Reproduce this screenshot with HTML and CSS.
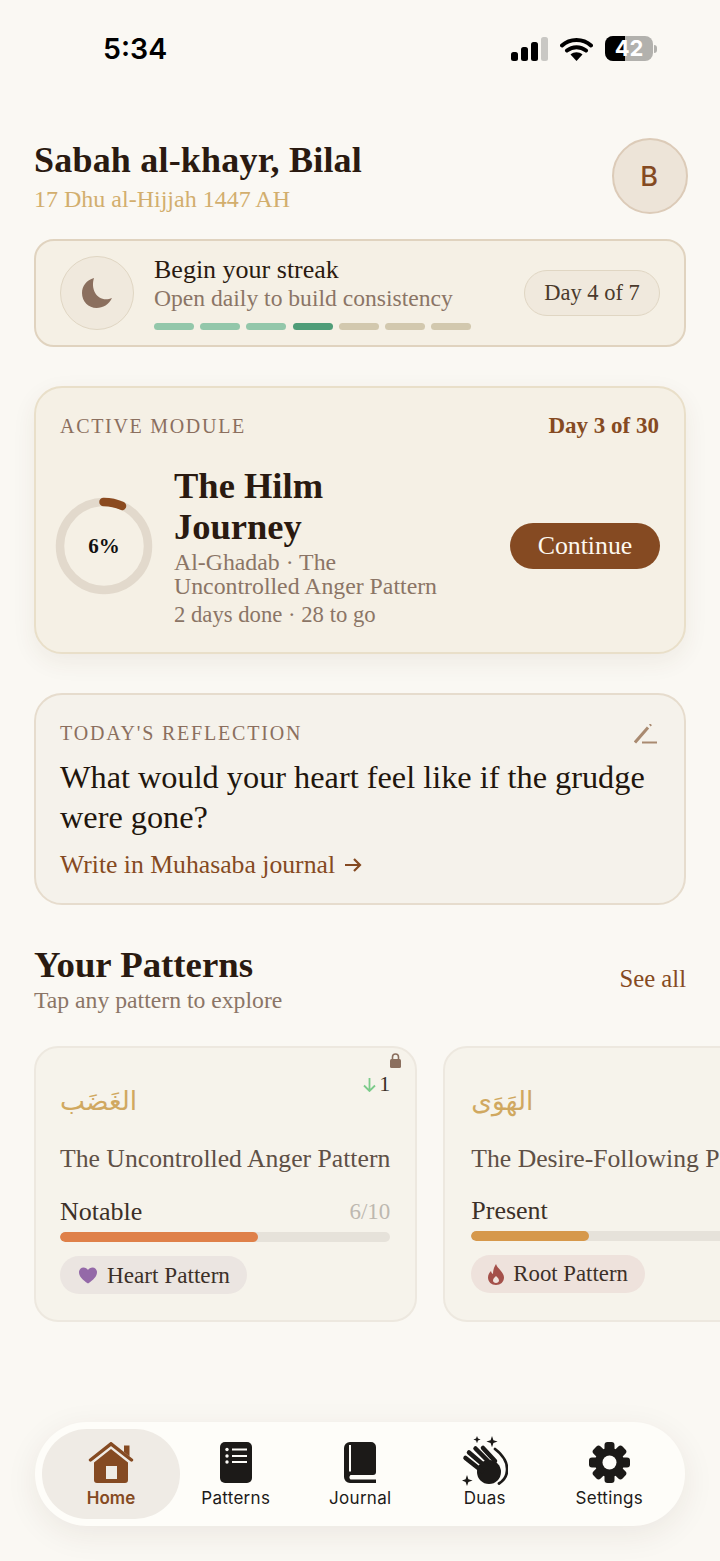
FILE: index.html
```html
<!DOCTYPE html>
<html lang="en">
<head>
    <meta charset="UTF-8">
    <meta name="viewport" content="width=device-width, initial-scale=1.0">
    <title>Home</title>
    <link rel="stylesheet" href="styles.css">
</head>
<body>
    <div class="status-bar">
        <span class="status-time">5:34</span>
        <div class="status-icons">
            <svg width="37" height="24" viewBox="0 0 37 24"><rect x="0" y="15" width="7" height="9" rx="2.5" fill="#000"/><rect x="10" y="10" width="7" height="14" rx="2.5" fill="#000"/><rect x="20" y="5" width="7" height="19" rx="2.5" fill="#000"/><rect x="30" y="0" width="7" height="24" rx="2.5" fill="#c9c8c4"/></svg>
            <svg width="33" height="24" viewBox="0 0 33 24"><path d="M2 8.5C10 1 23 1 31 8.5M7 13.5C12.500 9 20.500 9 26 13.500" fill="none" stroke="#000" stroke-width="4" stroke-linecap="round"/><path d="M16.500 24L10.500 17.500C14 14.500 19 14.500 22.500 17.500Z" fill="#000"/></svg>
            <div class="battery">
                <div class="battery-body"><span class="battery-fill"></span><span class="battery-num">42</span></div>
                <span class="battery-cap"></span>
            </div>
        </div>
    </div>

    <main class="content">
        <header class="greeting">
            <div>
                <h1>Sabah al-khayr, Bilal</h1>
                <p class="hijri">17 Dhu al-Hijjah 1447 AH</p>
            </div>
            <div class="avatar">B</div>
        </header>

        <section class="streak-card">
            <div class="moon-circle">
                <svg width="32" height="32" viewBox="0 0 32 32"><path d="M13 1C5.500 3 1 9 1 16c0 8.500 6.500 15 14.500 15 6.500 0 12.500-3.500 15.500-10-2 1-4 1.300-6 1.300C15.500 22.300 9.500 12 13 1Z" fill="#8b6f5e"/></svg>
            </div>
            <div class="streak-text">
                <div class="streak-title">Begin your streak</div>
                <div class="streak-sub">Open daily to build consistency</div>
                <div class="streak-bars">
                    <span class="seg done"></span><span class="seg done"></span><span class="seg done"></span><span class="seg today"></span><span class="seg"></span><span class="seg"></span><span class="seg"></span>
                </div>
            </div>
            <div class="day-pill">Day 4 of 7</div>
        </section>

        <section class="module-card">
            <div class="module-top">
                <span class="label">ACTIVE MODULE</span>
                <span class="module-day">Day 3 of 30</span>
            </div>
            <div class="module-body">
                <div class="ring">
                    <svg width="98" height="98" viewBox="0 0 98 98"><circle cx="49" cy="49" r="44" fill="none" stroke="#e2d9cc" stroke-width="8.500"/><path d="M48.500 5A44 44 0 0 1 67 8.900" fill="none" stroke="#8b4a1f" stroke-width="8.500" stroke-linecap="round"/></svg>
                    <span class="ring-num">6%</span>
                </div>
                <div class="module-info">
                    <h2>The Hilm<br>Journey</h2>
                    <p class="module-sub">Al-Ghadab · The<br>Uncontrolled Anger Pattern</p>
                    <p class="module-count">2 days done · 28 to go</p>
                </div>
                <div class="continue-btn">Continue</div>
            </div>
        </section>

        <section class="reflection-card">
            <div class="module-top">
                <span class="label">TODAY'S REFLECTION</span>
                <svg class="pen" width="24" height="20" viewBox="0 0 24 20"><path d="M1 18.500L14 3.500" fill="none" stroke="#a98a70" stroke-width="3"/><path d="M15.800 1.500l1.300-1.200" fill="none" stroke="#a98a70" stroke-width="2.400"/><path d="M8 18.500H23" fill="none" stroke="#a98a70" stroke-width="2"/></svg>
            </div>
            <p class="question">What would your heart feel like if the grudge were gone?</p>
            <div class="journal-link">Write in Muhasaba journal
                <svg width="18" height="16" viewBox="0 0 18 16"><path d="M1 8H16M10 2l6 6-6 6" fill="none" stroke="#854a22" stroke-width="2.200"/></svg>
            </div>
        </section>

        <div class="section-head">
            <div>
                <h2 class="section-title">Your Patterns</h2>
                <p class="section-sub">Tap any pattern to explore</p>
            </div>
            <span class="see-all">See all</span>
        </div>

        <div class="pattern-row">
            <article class="pattern-card">
                <svg class="lock" width="11" height="15" viewBox="0 0 11 15"><path d="M2.500 7V4a3 3 0 0 1 6 0v3" fill="none" stroke="#8b6f5e" stroke-width="1.600"/><rect x="0" y="6" width="11" height="9" rx="1.500" fill="#8b6f5e"/></svg>
                <div class="pattern-top">
                    <span class="arabic" lang="ar" dir="rtl">الغَضَب</span>
                    <span class="trend">
                        <svg width="13" height="15" viewBox="0 0 13 15"><path d="M6.500 1V14M1 8.500l5.500 5.500 5.500-5.500" fill="none" stroke="#7ccb8a" stroke-width="1.800"/></svg>
                        1
                    </span>
                </div>
                <p class="pattern-name">The Uncontrolled Anger Pattern</p>
                <div class="level-row"><span class="level">Notable</span><span class="score">6/10</span></div>
                <div class="track"><div class="fill anger" style="width: 60%"></div></div>
                <div class="tag heart-tag">
                    <svg width="18" height="17" viewBox="0 0 20 18"><path d="M10 18C4 13.500 0 10 0 5.300 0 2 2.400 0 5 0c2.200 0 4 1 5 3 1-2 2.800-3 5-3 2.600 0 5 2 5 5.300C20 10 16 13.500 10 18Z" fill="#9469a8"/></svg>
                    <span>Heart Pattern</span>
                </div>
            </article>
            <article class="pattern-card">
                <div class="pattern-top">
                    <span class="arabic" lang="ar" dir="rtl">الهَوَى</span>
                </div>
                <p class="pattern-name">The Desire-Following Pattern</p>
                <div class="level-row"><span class="level">Present</span></div>
                <div class="track"><div class="fill desire" style="width: 36%"></div></div>
                <div class="tag root-tag">
                    <svg width="16" height="21" viewBox="0 0 16 21"><path fill-rule="evenodd" d="M8 0c1 3 2.500 4 4.500 6.500C14.500 9 16 11 16 13.500 16 18 12.500 21 8 21s-8-3-8-7.500c0-3 1.500-5 3-6.500.3 1.500 1 2.500 2 3C5 6.500 6 3 8 0ZM8 12c-1.800 1.500-3 3-3 4.500S6.300 19 8 19s3-1 3-2.500S9.800 13.500 8 12Z" fill="#a4504a"/></svg>
                    <span>Root Pattern</span>
                </div>
            </article>
        </div>
    </main>

    <nav class="tab-bar">
        <div class="tab active">
            <svg width="46" height="41" viewBox="0 0 46 41"><path d="M2.500 18L23 1.800 43.500 18" fill="none" stroke="#854a22" stroke-width="3.400" stroke-linecap="round"/><path d="M36 3.500h5.500v11L36 10Z" fill="#854a22"/><path fill-rule="evenodd" d="M23 7L40 20.500V38a3 3 0 0 1-3 3H9a3 3 0 0 1-3-3V20.500ZM18 24V37H29V24Z" fill="#854a22"/></svg>
            <span>Home</span>
        </div>
        <div class="tab">
            <svg width="32" height="41" viewBox="0 0 32 41"><rect width="32" height="41" rx="5" fill="#1c1a18"/><g fill="#fdfcf8"><circle cx="7" cy="7.500" r="1.700"/><circle cx="7" cy="14" r="1.700"/><circle cx="7" cy="20" r="1.700"/><rect x="12" y="6.500" width="15" height="2"/><rect x="12" y="13" width="15" height="2"/><rect x="12" y="19" width="15" height="2"/></g></svg>
            <span>Patterns</span>
        </div>
        <div class="tab">
            <svg width="32" height="41" viewBox="0 0 32 41"><path fill-rule="evenodd" d="M6 0H27a5 5 0 0 1 5 5V30a3 3 0 0 1-3 3H6.500a3.200 3.200 0 0 0 0 4.500H32V41H6a6 6 0 0 1-6-6V6a6 6 0 0 1 6-6ZM5 3V29.500H7V3Z" fill="#1c1a18"/></svg>
            <span>Journal</span>
        </div>
        <div class="tab">
            <svg class="clap" width="46" height="50" viewBox="0 0 46 50">
                <g fill="#1c1a18">
                    <path d="M15 0l1 2.600 2.600 1-2.600 1-1 2.600-1-2.600-2.600-1 2.600-1ZM30 0l1.400 4.200 4.200 1.400-4.200 1.400L30 11.200l-1.400-4.200-4.200-1.400 4.200-1.400ZM5 39l1.400 4.200 4.200 1.400-4.200 1.400L5 50l-1.400-4-3.600-1.400 3.600-1.400Z"/>
                    <circle cx="27" cy="36" r="12"/>
                </g>
                <g fill="none" stroke="#1c1a18" stroke-linecap="round">
                    <path d="M3.500 22L20 35M7 16.500L24 31M13.500 12.500L29 28M21 12L33 25" stroke-width="4.500"/>
                    <path d="M33 13C41 19 47 28 44.500 38C43.500 42 41 45 37 47.500" stroke-width="2.800"/>
                </g>
            </svg>
            <span>Duas</span>
        </div>
        <div class="tab">
            <svg width="41" height="41" viewBox="0 0 41 41"><g fill="#1c1a18"><rect x="15.500" y="0" width="10" height="41" rx="3"/><rect x="15.500" y="0" width="10" height="41" rx="3" transform="rotate(45 20.500 20.500)"/><rect x="15.500" y="0" width="10" height="41" rx="3" transform="rotate(90 20.500 20.500)"/><rect x="15.500" y="0" width="10" height="41" rx="3" transform="rotate(135 20.500 20.500)"/><circle cx="20.500" cy="20.500" r="14.500"/></g><circle cx="20.500" cy="20.500" r="7" fill="#fefdf9"/></svg>
            <span>Settings</span>
        </div>
    </nav>
</body>
</html>
```

FILE: styles.css
```css
/* Global styles */
* {
    box-sizing: border-box;
}

body {
    margin: 0;
    width: 720px;
    height: 1561px;
    overflow: hidden;
    position: relative;
    background-color: #faf8f3;
    font-family: "Liberation Serif", serif;
    color: #2a1a10;
}

h1, h2, p {
    margin: 0;
    font-weight: normal;
}

/* Status bar */
.status-bar {
    height: 138px;
    display: flex;
    justify-content: space-between;
    align-items: flex-start;
    padding: 30px 63px 0 103px;
}

.status-time {
    font-family: Inter, sans-serif;
    font-size: 28.500px;
    font-weight: 600;
    line-height: 38px;
    color: #000;
}

.status-icons {
    display: flex;
    align-items: center;
    gap: 12px;
    margin-top: 6px;
}

.battery {
    display: flex;
    align-items: center;
    gap: 1px;
}

.battery-body {
    position: relative;
    width: 48px;
    height: 25px;
    border-radius: 8px;
    background-color: #b2b1ad;
    overflow: hidden;
}

.battery-fill {
    position: absolute;
    left: 0;
    top: 0;
    bottom: 0;
    width: 20px;
    background-color: #000;
}

.battery-num {
    position: absolute;
    left: 0;
    right: 0;
    top: 0;
    text-align: center;
    font-family: Inter, sans-serif;
    font-size: 22px;
    font-weight: 700;
    line-height: 25px;
    color: #fff;
}

.battery-cap {
    width: 3px;
    height: 8px;
    border-radius: 0 3px 3px 0;
    background-color: #b2b1ad;
}

/* Main */
.content {
    padding-left: 34px;
}

.greeting {
    width: 654px;
    height: 76px;
    display: flex;
    justify-content: space-between;
    align-items: flex-start;
}

.greeting h1 {
    font-size: 36px;
    font-weight: bold;
    letter-spacing: 0.2px;
    line-height: 42px;
    margin-top: 1px;
}

.hijri {
    font-size: 24px;
    line-height: 30px;
    margin-top: 3px;
    color: #d2ae6d;
}

.avatar {
    width: 76px;
    height: 76px;
    border-radius: 50%;
    border: 2px solid #dccbb8;
    background-color: #ede4d8;
    display: flex;
    align-items: center;
    justify-content: center;
    padding-right: 2px;
    font-family: Inter, sans-serif;
    font-size: 27px;
    font-weight: 500;
    color: #854a22;
}

/* Streak */
.streak-card {
    width: 652px;
    height: 108px;
    margin-top: 25px;
    padding: 0 24px;
    display: flex;
    align-items: center;
    background-color: #f5f0e5;
    border: 2px solid #e0d3bf;
    border-radius: 20px;
}

.moon-circle {
    width: 74px;
    height: 74px;
    border-radius: 50%;
    border: 1px solid #e0d6c3;
    background-color: #f0e9dd;
    display: flex;
    align-items: center;
    justify-content: center;
    margin-right: 20px;
    flex-shrink: 0;
}

.streak-text {
    flex: 1;
}

.streak-title {
    font-size: 26px;
    line-height: 28px;
}

.streak-sub {
    font-size: 23.600px;
    line-height: 28px;
    color: #8b7566;
}

.streak-bars {
    display: flex;
    gap: 6.200px;
    margin-top: 11px;
}

.seg {
    width: 40px;
    height: 7px;
    border-radius: 4px;
    background-color: #d2c8ae;
}

.seg.done {
    background-color: #93c7aa;
}

.seg.today {
    background-color: #4f9d78;
}

.day-pill {
    width: 136px;
    height: 46px;
    border: 1px solid #e0d6c3;
    border-radius: 23px;
    background-color: #f0e9dd;
    display: flex;
    align-items: center;
    justify-content: center;
    font-size: 22.500px;
    color: #4a3a2c;
}

/* Active module */
.module-card {
    width: 652px;
    height: 268px;
    margin-top: 39px;
    padding: 25px 24px 0 18px;
    background-color: #f5f0e5;
    border: 2px solid #e9dfc9;
    border-radius: 28px;
    box-shadow: 0 8px 24px rgba(90, 60, 30, 0.07);
}

.module-top {
    display: flex;
    justify-content: space-between;
    align-items: center;
    padding-left: 6px;
}

.label {
    font-size: 20px;
    line-height: 26px;
    letter-spacing: 1.700px;
    color: #8b6f5e;
}

.module-day {
    margin-right: 1px;
    font-size: 23px;
    font-weight: bold;
    color: #854a22;
}

.module-body {
    display: flex;
    align-items: center;
    margin-top: 26px;
}

.ring {
    position: relative;
    width: 98px;
    height: 98px;
    margin-left: 1px;
    margin-right: 21px;
    flex-shrink: 0;
}

.ring-num {
    position: absolute;
    left: 0;
    right: 0;
    top: 0;
    text-align: center;
    line-height: 98px;
    font-size: 21px;
    font-weight: bold;
    color: #111;
}

.module-info {
    flex: 1;
    margin-bottom: -2px;
}

.module-info h2 {
    font-size: 36.500px;
    font-weight: bold;
    line-height: 41px;
}

.module-sub {
    font-size: 23.800px;
    line-height: 24px;
    margin-top: 3px;
    color: #8b7566;
}

.module-count {
    font-size: 22.700px;
    line-height: 28px;
    margin-top: 3px;
    color: #8b7566;
}

.continue-btn {
    width: 150px;
    height: 46px;
    border-radius: 23px;
    background-color: #854a22;
    display: flex;
    align-items: center;
    justify-content: center;
    font-size: 25.800px;
    color: #fdf8ef;
}

/* Reflection */
.reflection-card {
    width: 652px;
    height: 212px;
    margin-top: 39px;
    padding: 25px 26px 0 18px;
    background-color: #f5f2eb;
    border: 2px solid #e6dccd;
    border-radius: 28px;
}

.reflection-card .label {
    letter-spacing: 1.800px;
}

.pen {
    margin-top: 1px;
}

.question {
    font-size: 32.300px;
    line-height: 40px;
    margin-top: 11px;
    padding-left: 6px;
    color: #21150c;
}

.journal-link {
    font-size: 25.700px;
    line-height: 30px;
    margin-top: 13px;
    padding-left: 6px;
    color: #854a22;
}

.journal-link svg {
    margin-left: 3px;
}

/* Patterns */
.section-head {
    width: 652px;
    margin-top: 39px;
    display: flex;
    justify-content: space-between;
    align-items: center;
}

.section-title {
    font-size: 36.800px;
    font-weight: bold;
    line-height: 42px;
}

.section-sub {
    font-size: 23.700px;
    line-height: 28px;
    color: #8b7566;
}

.see-all {
    font-size: 24.700px;
    color: #854a22;
}

.pattern-row {
    display: flex;
    gap: 26px;
    margin-top: 32px;
}

.pattern-card {
    position: relative;
    flex: 0 0 383px;
    height: 276px;
    padding: 24px 25px 0 24px;
    background-color: #f6f3eb;
    border: 2px solid #ede8df;
    border-radius: 24px;
}

.pattern-card + .pattern-card {
    padding-left: 26px;
}

.lock {
    position: absolute;
    top: 5px;
    right: 14px;
}

.pattern-top {
    height: 59px;
    display: flex;
    justify-content: space-between;
    align-items: flex-start;
}

.arabic {
    font-family: "DejaVu Sans", sans-serif;
    font-size: 26.500px;
    line-height: 58px;
    color: #d0a860;
}

.trend {
    display: inline-flex;
    align-items: center;
    gap: 3px;
    font-size: 22px;
    line-height: 24px;
    color: #3a2e26;
}

.pattern-name {
    font-size: 25.700px;
    line-height: 30px;
    margin-top: 13px;
    white-space: nowrap;
    color: #5e5046;
}

.level-row {
    display: flex;
    justify-content: space-between;
    margin-top: 23px;
    line-height: 30px;
}

.pattern-card + .pattern-card .level-row {
    margin-top: 22px;
}

.level {
    font-size: 26px;
    color: #3c3028;
}

.score {
    font-size: 23px;
    color: #bdb8b0;
}

.track {
    height: 10px;
    margin-top: 5px;
    border-radius: 5px;
    background-color: #e6e2da;
    overflow: hidden;
}

.fill {
    height: 100%;
    border-radius: 5px;
}

.fill.anger {
    background-color: #df8049;
}

.fill.desire {
    background-color: #d6984b;
}

.tag {
    display: inline-flex;
    align-items: center;
    height: 38px;
    margin-top: 14px;
    border-radius: 19px;
    color: #3c3028;
}

.tag svg {
    flex-shrink: 0;
}

.heart-tag {
    gap: 10px;
    padding: 0 17px 0 19px;
    font-size: 23.200px;
    background-color: #ebe5e1;
}

.root-tag {
    gap: 9px;
    padding: 0 17px;
    font-size: 22.800px;
    background-color: #eee2dc;
}

/* Bottom tab bar */
.tab-bar {
    position: absolute;
    left: 35px;
    top: 1422px;
    width: 650px;
    height: 104px;
    padding: 7px;
    display: grid;
    grid-template-columns: 131.500px repeat(4, 124.500px);
    background-color: #fefdf9;
    border-radius: 52px;
    box-shadow: 0 8px 32px rgba(60, 40, 20, 0.08);
}

.tab {
    display: flex;
    flex-direction: column;
    align-items: center;
    justify-content: flex-start;
    gap: 5px;
    padding-top: 13px;
    font-family: Inter, sans-serif;
    font-size: 17px;
    letter-spacing: 0.3px;
    color: #1c1a18;
}

.tab.active {
    width: 138px;
    background-color: #efebe5;
    border-radius: 45px;
    color: #854a22;
    font-weight: 600;
    letter-spacing: 0;
}

.clap {
    margin-top: -6px;
    margin-bottom: -3px;
}
```
